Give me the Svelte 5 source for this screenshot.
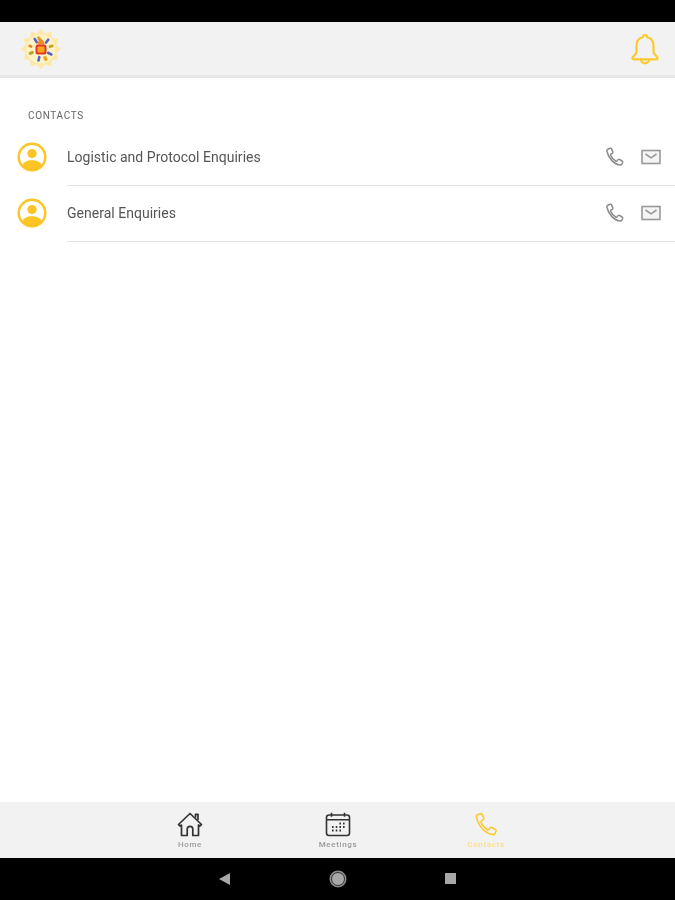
<script lang="ts">
  const contacts = ["Logistic and Protocol Enquiries", "General Enquiries"];
  const petals = Array.from({ length: 12 }, (_, i) => i * 30);
  const rays = [
    { a: -32, c: "#5b62c9", w: 2.6, h: 6 },
    { a: 38, c: "#5b62c9", w: 2.6, h: 6 },
    { a: 118, c: "#5b62c9", w: 2.6, h: 6 },
    { a: 192, c: "#5b62c9", w: 2.6, h: 6 },
    { a: 75, c: "#c9a520", w: 3, h: 5 },
    { a: 155, c: "#eda91c", w: 3.4, h: 5 },
    { a: 248, c: "#b9a225", w: 3, h: 5 },
    { a: 285, c: "#e8892a", w: 3, h: 4 },
    { a: -12, c: "#d9a520", w: 2.6, h: 4 },
  ];
</script>

{#snippet phone(size: number, color: string, width: number)}
  <svg class="icon" width={size} height={size} viewBox="0 0 24 24" fill="none" stroke={color} stroke-width={width} stroke-linejoin="round">
    <path d="M3.4 2.6 6.3 1.6c.7-.2 1.2.1 1.5.7l1.6 3.6c.2.6.1 1.1-.4 1.5L7 8.700c-.4.3-.5.7-.3 1.200 1.300 3 3.400 5.600 6.400 7.200.5.2.9.2 1.200-.2l1.300-1.700c.4-.5 1-.6 1.600-.3l3.400 1.900c.6.3.8.9.6 1.500l-1 2.400c-.3.7-.9 1.100-1.700 1C10.600 20.800 3.800 13.300 2.200 4.500c-.1-.8.4-1.600 1.200-1.900Z" />
  </svg>
{/snippet}

<div class="screen">
  <div class="statusbar"></div>

  <header class="appbar">
    <svg class="logo" width="40" height="40" viewBox="-20 -20 40 40">
      {#each petals as a}
        <path d="M-5-13 0-19 5-13Z" fill="#fce9a8" stroke="#fce9a8" stroke-width="1.500" stroke-linejoin="round" transform="rotate({a})" />
      {/each}
      <circle r="14.500" fill="#fdf3c6" />
      {#each rays as r}
        <rect x={-r.w / 2} y="-13" width={r.w} height={r.h} rx="1" fill={r.c} transform="rotate({r.a})" />
      {/each}
      <path d="M-1-11.500c2.500 2.500 4.500 3.500 4.500 7h-7c0-2.500 1.500-3.500 2.500-7Z" fill="#ef8a1e" />
      <rect x="-5.500" y="-4.500" width="11" height="10" rx="2.500" fill="#e5352b" />
      <rect x="-3.500" y="-2.500" width="7" height="6" rx="1" fill="#f7a81b" />
    </svg>
    <svg class="bell" width="28" height="32" viewBox="1 0 28 32" fill="none" stroke="#fdc92f" stroke-width="2.200" stroke-linejoin="round">
      <path d="M15 2c1.300 0 2.300 1 2.400 2.300C21.500 5.400 23.500 8.800 23.500 13v5.500c0 1.800 1.500 3.300 3.600 5.500.9 1 .4 2.300-.9 2.300H3.800c-1.300 0-1.800-1.300-.9-2.300 2.100-2.200 3.600-3.700 3.600-5.500V13c0-4.200 2-7.600 6.100-8.700C12.700 3 13.700 2 15 2Z" />
      <path d="M11 26.500c0 2.300 1.800 3.800 4 3.800s4-1.500 4-3.800" />
    </svg>
  </header>

  <main class="content">
    <h2 class="section">CONTACTS</h2>
    {#each contacts as name}
      <div class="row">
        <svg class="avatar" width="30" height="30" viewBox="0 0 30 30">
          <circle cx="15" cy="15" r="13.300" fill="#fff" stroke="#fdc425" stroke-width="2.400" />
          <circle cx="15" cy="11.600" r="4.600" fill="#fdc425" />
          <path d="M5 23.500c1.500-3.800 5.500-5.200 10-5.200s8.500 1.400 10 5.200c-2.500 3-6 4.800-10 4.800s-7.500-1.800-10-4.800Z" fill="#fdc425" />
        </svg>
        <div class="row-body">
          <span class="name">{name}</span>
          <div class="actions">
            {@render phone(20, "#8c8c8c", 1.800)}
            <svg class="icon" width="20" height="16" viewBox="0 0 20 16" fill="none" stroke="#999" stroke-width="1.600">
              <rect x="1" y="1.500" width="18" height="13" fill="#f4f4f4" />
              <path d="M4.500 5 10 8.800 15.500 5" />
            </svg>
          </div>
        </div>
      </div>
    {/each}
  </main>

  <nav class="tabbar">
    <div class="tab">
      <svg width="26" height="25" viewBox="0 0 26 25" fill="none" stroke="#333" stroke-width="1.700" stroke-linejoin="round">
        <path d="M1.500 12.500 13 1.500l11.500 11-1.800 1.600-1.200-1.100v10.500H15.800v-6.500c0-3.600-5.600-3.600-5.600 0V23.500H4.500V13l-1.200 1.100Z" />
        <path d="M18.500 5.800V2.300h2.500v5.800" />
      </svg>
      <span>Home</span>
    </div>
    <div class="tab">
      <svg width="26" height="25" viewBox="0 0 26 25" fill="none" stroke="#333" stroke-width="1.600">
        <rect x="1.500" y="3" width="23" height="20.500" rx="2.500" fill="#f2f2f2" />
        <path d="M1.500 7.800h23M6.500 .8v4M19.500 .8v4" />
        <path d="M7 18.500h1.600M10.700 18.500h1.600M14.400 18.500h1.600M7 15h1.600M10.700 15h1.600M14.400 15h1.600M18 15h1.600M14.400 11.600h1.600M18 11.600h1.600" stroke-width="2" />
      </svg>
      <span>Meetings</span>
    </div>
    <div class="tab active">
      {@render phone(25, "#fdc92f", 1.500)}
      <span>Contacts</span>
    </div>
  </nav>

  <footer class="navbar">
    <span class="back"></span>
    <span class="home"></span>
    <span class="recent"></span>
  </footer>
</div>

<style>
  :global(body) {
    margin: 0;
    background: #fff;
  }

  .screen {
    width: 675px;
    height: 900px;
    display: flex;
    flex-direction: column;
    font-family: Roboto, "Liberation Sans", sans-serif;
    overflow: hidden;
    filter: blur(0.45px);
  }

  .statusbar {
    height: 22px;
    background: #000;
  }

  .appbar {
    height: 53px;
    background: #f2f2f2;
    border-bottom: 3px solid #e6e6e6;
    display: flex;
    align-items: center;
    justify-content: space-between;
    padding: 0 16px 0 21px;
  }

  .content {
    flex: 1;
    background: #fff;
    padding-top: 32px;
  }

  .section {
    margin: 0 0 0 28px;
    font-size: 10px;
    line-height: 12px;
    font-weight: 400;
    letter-spacing: 0.65px;
    color: #666;
  }

  .row {
    display: flex;
    align-items: flex-start;
    padding-left: 17px;
    height: 56px;
  }

  .section + .row {
    margin-top: 8px;
  }

  .avatar {
    flex: none;
    margin-top: 12px;
  }

  .row-body {
    flex: 1;
    height: 56px;
    margin-left: 20px;
    border-bottom: 1px solid #e4e4e4;
    box-sizing: border-box;
    display: flex;
    align-items: center;
    justify-content: space-between;
    padding: 0 14px 2px 0;
  }

  .name {
    font-size: 14px;
    letter-spacing: 0.02px;
    color: #555;
  }

  .actions {
    display: flex;
    align-items: center;
    gap: 16px;
  }

  .tabbar {
    height: 56px;
    background: #f2f2f2;
    display: grid;
    grid-template-columns: repeat(3, 148px);
    justify-content: center;
    padding-left: 1px;
    box-sizing: border-box;
  }

  .tab {
    display: flex;
    flex-direction: column;
    align-items: center;
    padding-top: 10px;
    font-size: 8px;
    line-height: 10px;
    letter-spacing: 0.65px;
    font-weight: 500;
    color: #9a9a9a;
  }

  .tab span {
    margin-top: 3px;
  }

  .tab.active {
    color: #fbdc86;
  }

  .navbar {
    height: 42px;
    background: #000;
    display: grid;
    grid-template-columns: 20px 20px 20px;
    justify-content: center;
    justify-items: center;
    align-items: center;
    column-gap: 93px;
    padding-bottom: 1px;
    box-sizing: border-box;
  }

  .back {
    width: 0;
    height: 0;
    border-style: solid;
    border-width: 6px 11px 6px 0;
    border-color: transparent #a8a8a8 transparent transparent;
  }

  .home {
    width: 12px;
    height: 12px;
    border-radius: 50%;
    background: #a8a8a8;
    border: 1px solid #333;
    box-shadow: 0 0 0 1.500px #8c8c8c;
  }

  .recent {
    width: 11px;
    height: 11px;
    background: #a8a8a8;
  }
</style>
